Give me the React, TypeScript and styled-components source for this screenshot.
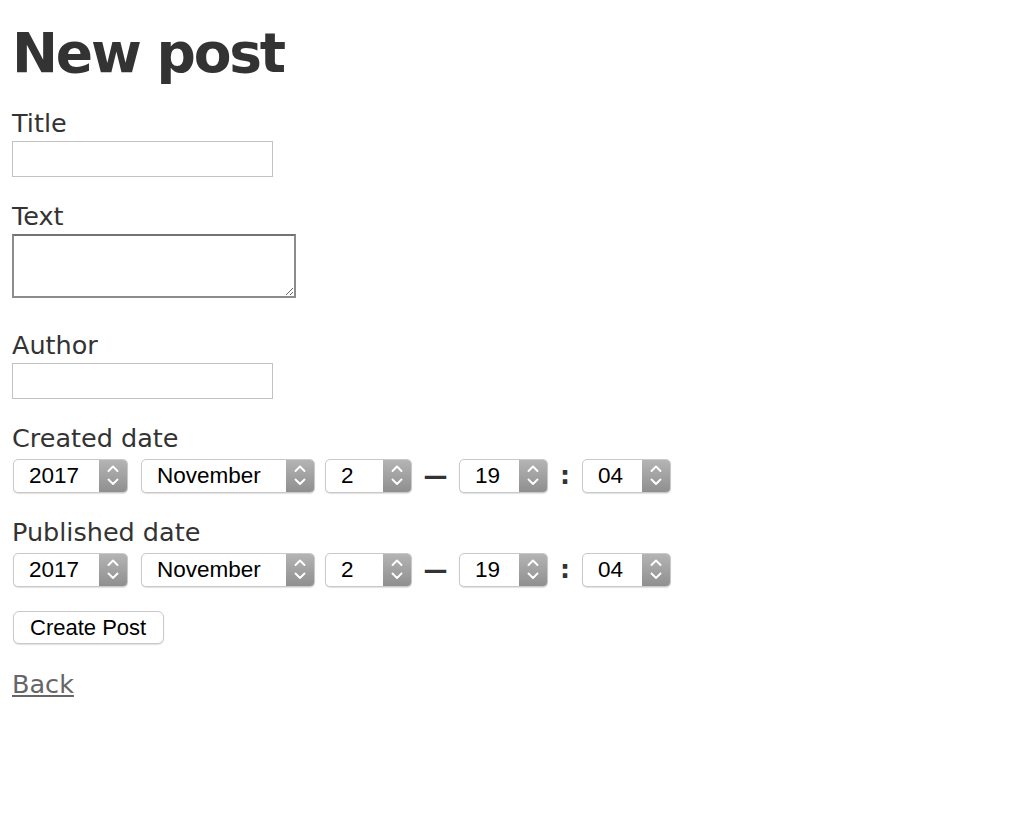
import React from "react";
import styled, { createGlobalStyle } from "styled-components";

const GlobalStyle = createGlobalStyle`
  html, body {
    margin: 0;
    padding: 0;
    background: #fff;
  }
  body {
    color: #333;
    font-family: "DejaVu Sans", Verdana, sans-serif;
  }
`;

const Page = styled.div`
  padding: 0 12px 40px;
`;

const Heading = styled.h1`
  margin: 21px 0 23px 0;
  font-size: 55px;
  line-height: 64px;
  font-weight: bold;
  letter-spacing: -2.2px;
  color: #333;
`;

const Form = styled.form`
  display: flex;
  flex-direction: column;
  align-items: flex-start;
`;

const Field = styled.div`
  display: flex;
  flex-direction: column;
  align-items: flex-start;
  margin-bottom: 24px;
`;

const Label = styled.label`
  display: block;
  font-size: 25.5px;
  line-height: 30px;
  color: #333;
`;

const TextInput = styled.input`
  box-sizing: border-box;
  width: 261px;
  height: 36px;
  margin: 3px 0 0;
  border: 1px solid #c2c2c2;
  background: #fff;
  padding: 0 4px;
  font-size: 20px;
  outline: none;
`;

const TextArea = styled.textarea`
  box-sizing: border-box;
  width: 284px;
  height: 64px;
  margin: 3px 0 8px;
  border: 2px solid #8c8c8c;
  border-top-color: #737373;
  background: #fff;
  font-size: 20px;
  outline: none;
  resize: both;
`;

const DateRow = styled.div`
  display: flex;
  align-items: center;
  margin-top: 6px;
  padding-left: 1px;
`;

const SelectBox = styled.div<{ $w: number; $gap?: number }>`
  box-sizing: border-box;
  display: flex;
  width: ${(p) => p.$w}px;
  height: 34px;
  margin-right: ${(p) => p.$gap ?? 0}px;
  border: 1px solid #c9c9c9;
  border-radius: 5px;
  overflow: hidden;
  background: #fff;
  box-shadow: 0 1px 1px rgba(0, 0, 0, 0.12);
`;

const SelectValue = styled.span`
  flex: 1;
  display: flex;
  align-items: center;
  padding-left: 15px;
  font-family: "Liberation Sans", Arial, sans-serif;
  font-size: 22.5px;
  color: #000;
`;

const SelectArrow = styled.span`
  width: 28px;
  display: flex;
  align-items: center;
  justify-content: center;
  background: linear-gradient(#b4b4b4, #8f8f8f);
`;

const Sep = styled.span<{ $w: number; $bold?: boolean; $size: number }>`
  width: ${(p) => p.$w}px;
  text-align: center;
  font-size: ${(p) => p.$size}px;
  font-weight: ${(p) => (p.$bold ? "bold" : "normal")};
  color: #333;
  line-height: 30px;
`;

const Button = styled.button`
  box-sizing: border-box;
  height: 33px;
  margin-left: 1px;
  padding: 0 17px 0 16px;
  border: 1px solid #c9c9c9;
  border-radius: 6px;
  background: #fff;
  box-shadow: 0 1px 1px rgba(0, 0, 0, 0.12);
  font-family: "Liberation Sans", Arial, sans-serif;
  font-size: 22px;
  color: #000;
`;

const BackLink = styled.a`
  display: inline-block;
  margin-top: 25px;
  font-size: 25.5px;
  line-height: 30px;
  color: #666;
  text-decoration: underline;
`;

const Chevrons = () => (
  <svg width="12" height="24" viewBox="0 0 12 24" fill="none">
    <polyline points="1.5,7 6,2.5 10.5,7" stroke="#fff" strokeWidth="1.9" strokeLinecap="round" strokeLinejoin="round" />
    <polyline points="1.5,15.5 6,20 10.5,15.5" stroke="#fff" strokeWidth="1.9" strokeLinecap="round" strokeLinejoin="round" />
  </svg>
);

const Select = ({ value, w, gap }: { value: string; w: number; gap?: number }) => (
  <SelectBox $w={w} $gap={gap}>
    <SelectValue>{value}</SelectValue>
    <SelectArrow>
      <Chevrons />
    </SelectArrow>
  </SelectBox>
);

const DateSelect = () => (
  <DateRow>
    <Select value="2017" w={115} gap={13} />
    <Select value="November" w={174} gap={10} />
    <Select value="2" w={87} />
    <Sep $w={47} $size={24} $bold>—</Sep>
    <Select value="19" w={89} />
    <Sep $w={34} $size={25} $bold>:</Sep>
    <Select value="04" w={89} />
  </DateRow>
);

export default function App() {
  return (
    <Page>
      <GlobalStyle />
      <Heading>New post</Heading>
      <Form onSubmit={(e) => e.preventDefault()}>
        <Field>
          <Label>Title</Label>
          <TextInput type="text" />
        </Field>
        <Field>
          <Label>Text</Label>
          <TextArea />
        </Field>
        <Field>
          <Label>Author</Label>
          <TextInput type="text" />
        </Field>
        <Field>
          <Label>Created date</Label>
          <DateSelect />
        </Field>
        <Field>
          <Label>Published date</Label>
          <DateSelect />
        </Field>
        <Button type="submit">Create Post</Button>
      </Form>
      <BackLink href="#">Back</BackLink>
    </Page>
  );
}
